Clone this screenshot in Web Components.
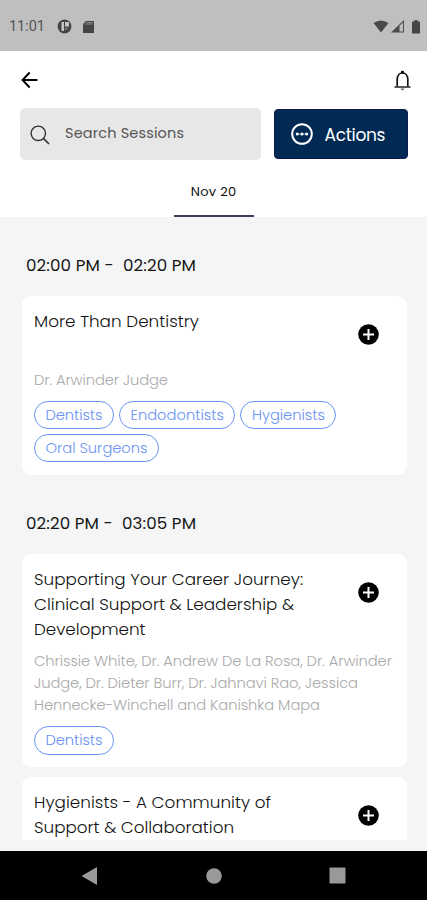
<!DOCTYPE html>
<html lang="en">
<head>
<meta charset="utf-8">
<title>Sessions</title>
<style>
html,body{margin:0;height:100%;overflow:hidden}
body{font-family:Poppins,Inter,"Liberation Sans",sans-serif;font-weight:300;color:#111}
</style>
</head>
<body>
<sessions-app></sessions-app>
<script>
const define=(name,html,setup)=>{
  const t=document.createElement('template');
  t.innerHTML=html;
  customElements.define(name,class extends HTMLElement{
    constructor(){super();this.attachShadow({mode:'open'}).append(t.content.cloneNode(true));}
    connectedCallback(){if(setup)setup(this);}
  });
};

/* One line of text, tracked so that it spans the width given in "w". */
define('text-line','<style>:host{display:block;white-space:pre;width:max-content}</style><slot></slot>',el=>{
  const w=parseFloat(el.getAttribute('w'));
  const n=el.textContent.length;
  el.style.letterSpacing='0px';
  const natural=el.getBoundingClientRect().width;
  if(w&&natural&&n>1){
    const s=(w-natural)/(n-1);
    el.style.letterSpacing=s.toFixed(3)+'px';
    el.style.marginRight=(-s).toFixed(3)+'px';
  }
});

define('status-bar',`<style>
:host{display:flex;align-items:center;height:51px;box-sizing:border-box;padding:2px 7px 0 9px;background:#bfbfbf;color:#555;font:400 14.5px/20px Roboto,sans-serif}
svg{display:block}.a{margin-left:12px}.b{margin-left:10px}.w{margin-left:auto}.s{margin-left:2px}.t{margin-left:7px}
</style>
<text-line w="36">11:01</text-line>
<svg class="a" width="15" height="15" viewBox="0 0 15 15"><circle cx="7.500" cy="7.500" r="6.900" fill="#444"/><path d="M4.500 3h2.500v9H4.500z" fill="#c4c4c4"/><path d="M8 3h4v4.500H8z" fill="#c4c4c4"/><path d="M8 8.500h3.500L8 12z" fill="#777"/></svg>
<svg class="b" width="13" height="14" viewBox="0 0 13 14"><path d="M4 1h8v12H1V4z" fill="#444"/><path d="M4.500 2.500h6.500M2.500 4h8" stroke="#888" stroke-width="1"/></svg>
<svg class="w" width="16" height="13" viewBox="0 0 16 13"><path d="M.5 3Q8-2 15.500 3L8 12.500Z" fill="#4a4a4a"/></svg>
<svg class="s" width="14" height="13" viewBox="0 0 14 13"><path d="M0 12.500 13 0V12.500Z" fill="#4a4a4a"/><path d="M8.500 5.800 12 2.500V11.500H8.500Z" fill="#bdbdbd"/></svg>
<svg class="t" width="8" height="14" viewBox="0 0 8 14"><path d="M2.500 0h3v1.500H8V13.500H0V1.500h2.500z" fill="#444"/></svg>`);

define('top-bar',`<style>
:host{display:flex;justify-content:space-between;align-items:center;height:57px;padding:1px 16px 0 21px;box-sizing:border-box;background:#fff}
svg{display:block}
</style>
<svg width="17" height="18" viewBox="0 0 17 18"><path d="M16.500 9H1.500M8.700 1.500 1.500 9l7.200 7.500" fill="none" stroke="#000" stroke-width="1.900"/></svg>
<svg width="17" height="21" viewBox="0 0 17 21"><path d="M3.200 17V9.500C3.200 5.500 5.500 3 8.500 3s5.300 2.500 5.300 6.500V17" fill="none" stroke="#111" stroke-width="1.700"/><path d="M7.500 3.400V1.300h2v2.100" fill="#000" stroke="#000"/><path d="M.5 17h16" stroke="#444" stroke-width="1.800"/><path d="M6.500 18.600h4q-.6 1.700-2 1.700t-2-1.700z" fill="#666"/></svg>`);

define('search-field',`<style>
:host{display:flex;align-items:center;width:241px;height:52px;box-sizing:border-box;padding-left:10px;gap:15px;background:#e7e7e7;border-radius:5px;color:#555;font-size:14.500px;font-weight:400}
svg{display:block;margin-top:2px}
</style>
<svg width="20" height="20" viewBox="0 0 20 20"><circle cx="8.300" cy="8.300" r="7.200" fill="none" stroke="#333" stroke-width="1.400"/><path d="m13.400 13.400 5.600 5.600" stroke="#333" stroke-width="1.700"/></svg>
<slot></slot>`);

define('action-button',`<style>
:host{display:flex;align-items:center;width:134px;height:50px;box-sizing:border-box;padding:1px 0 0 16px;gap:11.500px;background:#002a54;border:1px solid #10194c;border-radius:4px;color:#fff;font-size:17px;font-weight:400}
svg{display:block;margin-top:-1px}
</style>
<svg width="22" height="22" viewBox="0 0 22 22"><circle cx="11" cy="11" r="9.800" fill="none" stroke="#fff" stroke-width="2"/><path d="M5 11h12" stroke="#9aaaba" stroke-width="1"/><g fill="#fff"><circle cx="6.300" cy="11" r="1.500"/><circle cx="11" cy="11" r="1.500"/><circle cx="15.700" cy="11" r="1.500"/></g></svg>
<slot></slot>`);

define('day-tab',`<style>
:host{display:flex;justify-content:center;align-items:center;width:80px;height:49px;box-sizing:border-box;border-bottom:2px solid #3b3b61;font-size:13px;font-weight:400;color:#111}
</style><slot></slot>`);

define('session-time',`<style>
:host{display:block;padding-left:26px;font-size:16.700px;line-height:24px;font-weight:400;color:#151515}
</style><slot></slot>`);

define('tag-pill',`<style>
:host{display:flex;align-items:center;justify-content:center;height:28.500px;box-sizing:border-box;border:1px solid #6a93f5;border-radius:14.500px;padding:0 10.500px;color:#6a93f5;font-size:14.700px}
</style><slot></slot>`);

define('session-card',`<style>
:host{display:block;margin:0 20px 0 22px;width:385px;box-sizing:border-box;padding:13px 12px 12.500px;background:#fff;border-radius:9px}
.head{display:flex;justify-content:space-between;min-height:52px}
.title{font-size:16.800px;line-height:25px;color:#111}
.add{display:block;margin:15px 16px 0 0}
.who{margin-top:9px;font-size:14.700px;line-height:21.800px;color:#aaa}
.tags{display:flex;flex-wrap:wrap;gap:4.500px 5px;margin-top:9.200px}
</style>
<div class="head"><div class="title"><slot name="title"></slot></div>
<svg class="add" width="21" height="21" viewBox="0 0 21 21"><circle cx="10.500" cy="10.500" r="10.300" fill="#000"/><path d="M10.500 5v11M5 10.500h11" stroke="#fff" stroke-width="2"/></svg></div>
<div class="who"><slot name="who"></slot></div>
<div class="tags"><slot name="tag"></slot></div>`);

define('nav-bar',`<style>
:host{display:flex;align-items:center;height:49px;background:#000;padding-left:81px;box-sizing:border-box}
svg{display:block}.c{margin-left:108px}.r{margin-left:106.500px}
</style>
<svg width="17" height="18" viewBox="0 0 17 18"><path d="M16 0v18L.5 9z" fill="#999"/></svg>
<svg class="c" width="16" height="16" viewBox="0 0 16 16"><circle cx="8" cy="8" r="7.800" fill="#999"/></svg>
<svg class="r" width="17" height="17" viewBox="0 0 17 17"><rect x=".5" y=".5" width="16" height="16" rx=".8" fill="#999"/></svg>`);

define('sessions-app',`<style>
:host{display:flex;flex-direction:column;height:900px;width:427px;background:#f5f5f5;overflow:hidden}
.tools{display:flex;gap:13px;padding:0 19px 0 20px;align-items:center;background:#fff}
.q{margin-top:-1px}
.days{display:flex;justify-content:center;background:#fff;padding:8px 0 0}
.list{height:623px;overflow:hidden}
.t1{margin-top:36px;margin-bottom:19px}.t2{margin-top:36px;margin-bottom:19.500px}
.last{margin-top:9.800px}
nav-bar{margin-top:auto}
</style>
<status-bar></status-bar>
<top-bar></top-bar>
<div class="tools"><search-field><text-line class="q" w="119">Search Sessions</text-line></search-field><action-button><text-line w="61">Actions</text-line></action-button></div>
<div class="days"><day-tab><text-line w="45.500">Nov 20</text-line></day-tab></div>
<div class="list">
<session-time class="t1"><text-line w="170">02:00 PM -  02:20 PM</text-line></session-time>
<session-card>
<text-line slot="title" w="165">More Than Dentistry</text-line>
<text-line slot="who" w="134">Dr. Arwinder Judge</text-line>
<tag-pill slot="tag"><text-line w="57">Dentists</text-line></tag-pill><tag-pill slot="tag"><text-line w="93.500">Endodontists</text-line></tag-pill><tag-pill slot="tag"><text-line w="73">Hygienists</text-line></tag-pill><tag-pill slot="tag"><text-line w="102">Oral Surgeons</text-line></tag-pill>
</session-card>
<session-time class="t2"><text-line w="170">02:20 PM -  03:05 PM</text-line></session-time>
<session-card>
<text-line slot="title" w="269">Supporting Your Career Journey:</text-line><text-line slot="title" w="260">Clinical Support &amp; Leadership &amp;</text-line><text-line slot="title" w="111.500">Development</text-line>
<text-line slot="who" w="358">Chrissie White, Dr. Andrew De La Rosa, Dr. Arwinder</text-line><text-line slot="who" w="324">Judge, Dr. Dieter Burr, Dr. Jahnavi Rao, Jessica</text-line><text-line slot="who" w="286">Hennecke-Winchell and Kanishka Mapa</text-line>
<tag-pill slot="tag"><text-line w="57">Dentists</text-line></tag-pill>
</session-card>
<session-card class="last">
<text-line slot="title" w="237">Hygienists - A Community of</text-line><text-line slot="title" w="200">Support &amp; Collaboration</text-line>
</session-card>
</div>
<nav-bar></nav-bar>`);
</script>
</body>
</html>
